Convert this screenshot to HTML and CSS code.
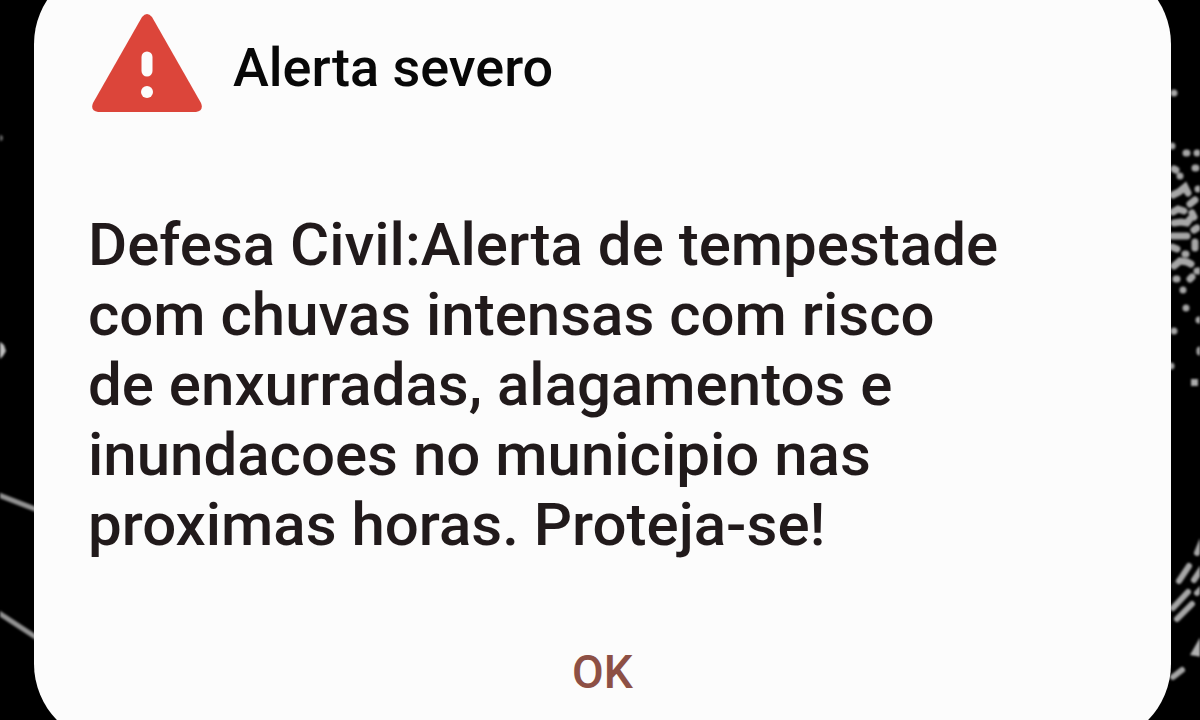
FILE: index.html
```html
<!DOCTYPE html>
<html lang="pt-BR">
<head>
<meta charset="utf-8">
<meta name="viewport" content="width=device-width, initial-scale=1">
<title>Alerta severo</title>
<link rel="stylesheet" href="styles.css">
</head>
<body>
<svg class="wallpaper wallpaper-left" viewBox="0 0 40 720" aria-hidden="true">
  <g stroke="#929292" stroke-width="5" fill="none">
    <path d="M-4 494 40 511"/>
    <path d="M-4 611 40 640"/>
  </g>
  <path d="M-2 340 4 345 6 351 3 356-2 361z" fill="#c0c0c0"/>
  <circle cx="0" cy="138" r="3" fill="#666"/>
</svg>
<svg class="wallpaper wallpaper-right" viewBox="1160 0 40 720" aria-hidden="true">
  <g stroke="#a6a6a6" stroke-width="7" stroke-linecap="round" fill="none">
    <path d="M1174 93h0M1172 146h0M1186 153h1M1197 153h0M1174 169l2 1M1180 176h0M1195 168h1"/>
    <path d="M1173 195l6-3 6-5 3 6M1198 189h0M1190 204l5-4M1173 212l5-3 6 2M1192 213l2 4M1174 223l7-1 6 1 3-4M1172 236h15M1194 230l3-2M1172 247l5 2M1195 242v6M1185 254h1M1174 266l6-5 7 1 4 2M1197 271h2M1176 279h1M1190 279l2-2M1183 290h0"/>
    <path d="M1186 308h0M1199 320h0M1174 331h0M1200 350v2M1171 366h0"/>
  </g>
  <path d="M1191 379h7v7h-7z" fill="#ababab"/>
  <g stroke="#a6a6a6" stroke-width="6" stroke-linecap="round" fill="none">
    <path d="M1197 553l5-12M1179 581l10-15M1194 580l8-12M1173 608l15-16M1177 619l15-15M1197 593l5-5M1173 677l9-7"/>
  </g>
  <path d="M1202 634v23l-12-2z" fill="#b0b0b0"/>
</svg>
<main class="alert" role="alertdialog" aria-labelledby="alert-title" aria-describedby="alert-message">
  <header class="alert-header">
    <svg class="alert-icon" viewBox="0 0 112 98" aria-hidden="true">
      <path d="M51 3Q56-3 61 3L110 89Q113 97 105 98H7Q-1 97 2 89Z" fill="#dc453a"/>
      <path d="M56 43v14" stroke="#fcfcfc" stroke-width="11" stroke-linecap="round"/>
      <circle cx="56" cy="78" r="6" fill="#fcfcfc"/>
    </svg>
    <h1 class="alert-title" id="alert-title">Alerta severo</h1>
  </header>
  <p class="alert-message" id="alert-message">Defesa Civil:Alerta de tempestade<br>com chuvas intensas com risco<br>de enxurradas, alagamentos e<br>inundacoes no municipio nas<br>proximas horas. Proteja-se!</p>
  <button class="alert-ok" type="button">OK</button>
</main>
</body>
</html>
```
FILE: styles.css
```css
* {
  box-sizing: border-box;
}

body {
  margin: 0;
  min-height: 100vh;
  overflow: hidden;
  background: #000;
  font-family: Roboto, "Liberation Sans", sans-serif;
}

.wallpaper {
  position: absolute;
  top: 0;
  width: 40px;
  height: 720px;
  filter: blur(1px);
}

.wallpaper-left {
  left: 0;
}

.wallpaper-right {
  right: 0;
}

.alert {
  position: relative;
  display: flex;
  flex-direction: column;
  margin: -36px 29px -34px 34px;
  padding: 50px 54px 36px;
  border-radius: 80px;
  background: #fcfcfc;
}

.alert-header {
  display: flex;
  align-items: center;
  gap: 30px;
  padding-left: 3px;
}

.alert-icon {
  flex: none;
  width: 112px;
  height: 98px;
}

.alert-title {
  margin: 0;
  padding-top: 10px;
  color: #080808;
  font-size: 54px;
  font-weight: 500;
  line-height: 64px;
}

.alert-message {
  margin: 98px 0 0;
  color: #211a1b;
  font-size: 60px;
  font-weight: 500;
  line-height: 70px;
}

.alert-ok {
  align-self: center;
  margin-top: 76px;
  padding: 8px 32px;
  border: 0;
  background: none;
  color: #8d5045;
  font: inherit;
  font-size: 46px;
  font-weight: 500;
  line-height: 56px;
}
```
